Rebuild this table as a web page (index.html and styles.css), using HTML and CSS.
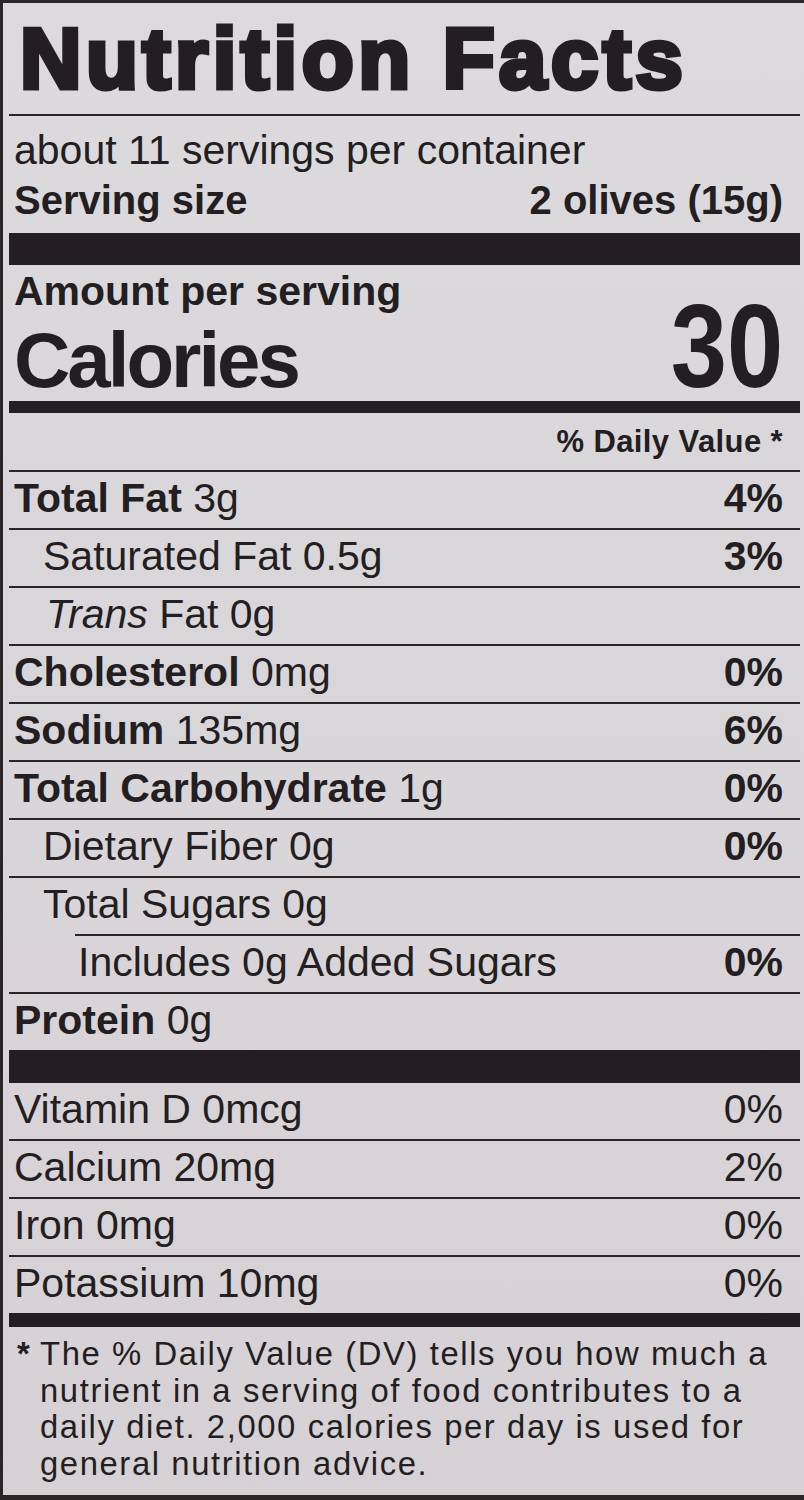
FILE: index.html
```html
<!DOCTYPE html>
<html lang="en">
<head>
<meta charset="utf-8">
<title>Nutrition Facts</title>
<link rel="stylesheet" href="styles.css">
</head>
<body>
<div class="label">
  <h1 class="title">Nutrition Facts</h1>
  <div class="servings">
    <div class="per-container">about 11 servings per container</div>
    <div class="serving-size"><span>Serving size</span><span>2 olives (15g)</span></div>
  </div>
  <div class="bar bar-thick"></div>
  <div class="calories">
    <div class="cal-left">
      <div class="amount">Amount per serving</div>
      <div class="cal-label">Calories</div>
    </div>
    <div class="cal-value"><span>30</span></div>
  </div>
  <div class="bar bar-medium"></div>
  <div class="dv-head">% Daily Value *</div>
  <div class="nutrients">
    <div class="row"><span><b>Total Fat</b> 3g</span><b>4%</b></div>
    <div class="row sub"><span>Saturated Fat 0.5g</span><b>3%</b></div>
    <div class="row trans"><span><i>Trans</i> Fat 0g</span></div>
    <div class="row"><span><b>Cholesterol</b> 0mg</span><b>0%</b></div>
    <div class="row"><span><b>Sodium</b> 135mg</span><b>6%</b></div>
    <div class="row"><span><b>Total Carbohydrate</b> 1g</span><b>0%</b></div>
    <div class="row sub"><span>Dietary Fiber 0g</span><b>0%</b></div>
    <div class="row sub sugars"><span>Total Sugars 0g</span></div>
    <div class="row subsub"><span>Includes 0g Added Sugars</span><b>0%</b></div>
    <div class="row"><span><b>Protein</b> 0g</span></div>
  </div>
  <div class="bar bar-thick2"></div>
  <div class="vitamins">
    <div class="row"><span>Vitamin D 0mcg</span><span>0%</span></div>
    <div class="row"><span>Calcium 20mg</span><span>2%</span></div>
    <div class="row"><span>Iron 0mg</span><span>0%</span></div>
    <div class="row"><span>Potassium 10mg</span><span>0%</span></div>
  </div>
  <div class="bar bar-medium2"></div>
  <p class="foot"><span class="star">*</span>The % Daily Value (DV) tells you how much a<br>nutrient in a serving of food contributes to a<br>daily diet. 2,000 calories per day is used for<br>general nutrition advice.</p>
</div>
</body>
</html>
```
FILE: styles.css
```css
html, body {
  margin: 0;
  padding: 0;
  background: #d9d6da;
}

.label {
  box-sizing: border-box;
  width: 804px;
  height: 1500px;
  border-left: 3px solid #2a2628;
  border-top: 3px solid #2a2628;
  border-bottom: 5px solid #2a2628;
  padding: 0 4px 0 6px;
  font-family: "Liberation Sans", Arial, sans-serif;
  color: #221e21;
  background: linear-gradient(180deg, #dcdadd 0%, #d9d6da 45%, #d6d1d5 100%);
  overflow: hidden;
}

.title {
  margin: 0;
  height: 111px;
  line-height: 111px;
  font-size: 85px;
  font-weight: 700;
  letter-spacing: 4.5px;
  padding-left: 11px;
  -webkit-text-stroke: 5px #221e21;
  border-bottom: 2px solid #2a2628;
  white-space: nowrap;
}

.servings {
  padding: 9px 17px 8px 5px;
}

.per-container {
  font-size: 41px;
  line-height: 50px;
  white-space: nowrap;
}

.serving-size {
  display: flex;
  justify-content: space-between;
  font-size: 40px;
  line-height: 50px;
  font-weight: 700;
  white-space: nowrap;
}

.bar {
  background: #221e21;
}

.bar-thick { height: 32px; }
.bar-medium { height: 12px; }
.bar-thick2 { height: 33px; }
.bar-medium2 { height: 14px; }

.calories {
  box-sizing: border-box;
  height: 136px;
  padding: 1px 17px 0 5px;
  display: flex;
  justify-content: space-between;
  align-items: flex-end;
}

.amount {
  font-size: 41px;
  line-height: 50px;
  font-weight: 700;
  white-space: nowrap;
}

.cal-label {
  margin-top: 3px;
  font-size: 78px;
  line-height: 82px;
  font-weight: 700;
  letter-spacing: -3px;
}

.cal-value {
  font-size: 119px;
  line-height: 110px;
  font-weight: 700;
}

.cal-value span {
  display: inline-block;
  transform: scaleX(0.85);
  transform-origin: right center;
}

.dv-head {
  height: 57px;
  line-height: 57px;
  font-size: 31px;
  font-weight: 700;
  letter-spacing: 0.4px;
  text-align: right;
  padding-right: 17px;
  white-space: nowrap;
}

.row {
  box-sizing: border-box;
  display: flex;
  justify-content: space-between;
  height: 58px;
  border-top: 2px solid #2a2628;
  padding: 0 17px 4px 5px;
  font-size: 41px;
  line-height: 52px;
  white-space: nowrap;
}

.row b { font-weight: 700; }

.row.sub { padding-left: 34px; }
.row.trans { padding-left: 37px; }
.row.subsub {
  margin-left: 66px;
  padding-left: 3px;
}

.vitamins .row:first-child {
  border-top: 0;
  height: 56px;
}

.foot {
  box-sizing: border-box;
  margin: 0;
  height: 168px;
  padding: 9px 0 0 31px;
  font-size: 32.8px;
  line-height: 36.67px;
  letter-spacing: 1.6px;
  white-space: nowrap;
}

.star {
  display: inline-block;
  width: 23px;
  margin-left: -23px;
  font-weight: 700;
}
```
